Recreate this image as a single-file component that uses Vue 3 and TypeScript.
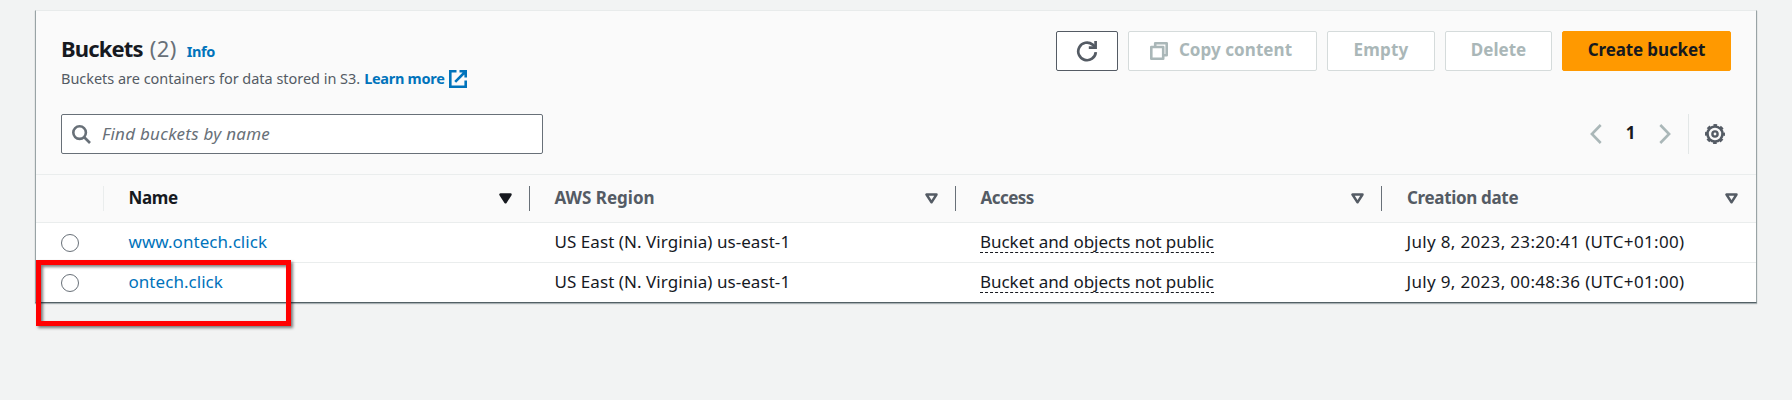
<script setup lang="ts">
interface Bucket {
  name: string
  region: string
  access: string
  created: string
}

const columns = [
  { label: 'Name', cls: 'h-name', sorted: true },
  { label: 'AWS Region', cls: '', sorted: false },
  { label: 'Access', cls: 'h-access', sorted: false },
  { label: 'Creation date', cls: 'h-date', sorted: false },
]

const buckets: Bucket[] = [
  { name: 'www.ontech.click', region: 'US East (N. Virginia) us-east-1', access: 'Bucket and objects not public', created: 'July 8, 2023, 23:20:41 (UTC+01:00)' },
  { name: 'ontech.click', region: 'US East (N. Virginia) us-east-1', access: 'Bucket and objects not public', created: 'July 9, 2023, 00:48:36 (UTC+01:00)' },
]
</script>

<template>
  <main class="page">
    <section class="panel">
      <header class="head">
        <div class="titles">
          <h2 class="title">Buckets <span class="count">(2)</span><a class="info">Info</a></h2>
          <p class="desc">
            <span>Buckets are containers for data stored in S3.</span>
            <a class="learn">Learn more</a>
            <svg class="ext" width="18" height="18" viewBox="0 0 18 18" fill="none" stroke="currentColor" stroke-width="2.6">
              <path d="M7.5 1.3H1.3v15.4h15.4V10.5" />
              <path d="M10.5 1.3h6.2v6.2M16.5 1.5L6.2 11.8" />
            </svg>
          </p>
        </div>
        <div class="actions">
          <button class="btn refresh" aria-label="Refresh">
            <svg width="22" height="22" viewBox="0 0 22 22" fill="none" stroke="currentColor" stroke-width="2.7">
              <path d="M19.8 12.2a8.8 8.8 0 1 1-3.2-7.6l2.4 2.2" />
              <path d="M19.6 1v6.7h-6.8" />
            </svg>
          </button>
          <button class="btn off copy">
            <svg width="18" height="18" viewBox="0 0 18 18" fill="none" stroke="currentColor" stroke-width="2.6" stroke-linejoin="round">
              <path d="M1.3 5h11.9v11.7H1.3z" />
              <path d="M5.2 4.8V1.3h11.5v11.9H13.4" />
            </svg>
            <span>Copy content</span>
          </button>
          <button class="btn off empty">Empty</button>
          <button class="btn off delete">Delete</button>
          <button class="btn primary">Create bucket</button>
        </div>
      </header>

      <div class="tools">
        <div class="search">
          <svg width="19" height="19" viewBox="0 0 19 19" fill="none" stroke="currentColor" stroke-width="2.6">
            <circle cx="7.6" cy="7.6" r="6.3" />
            <path d="M12 12l6 6" />
          </svg>
          <span>Find buckets by name</span>
        </div>
        <div class="pager">
          <svg class="arrow" width="12" height="20" viewBox="0 0 12 20" fill="none" stroke="currentColor" stroke-width="2.6"><path d="M10.7 1L1.9 10l8.8 9" /></svg>
          <span class="num">1</span>
          <svg class="arrow" width="12" height="20" viewBox="0 0 12 20" fill="none" stroke="currentColor" stroke-width="2.6"><path d="M1.3 1l8.8 9-8.8 9" /></svg>
          <span class="rule"></span>
          <svg class="gear" width="20" height="20" viewBox="0 0 20 20" fill="none" stroke="currentColor">
            <circle cx="10" cy="10" r="7.5" stroke-width="2.6" />
            <circle cx="10" cy="10" r="9" stroke-width="2" stroke-dasharray="3.7 3.369" stroke-dashoffset="1.85" />
            <circle cx="10" cy="10" r="2.6" stroke-width="2.4" />
          </svg>
        </div>
      </div>

      <div class="row header">
        <div class="pick"></div>
        <div v-for="c in columns" :key="c.label" class="cell" :class="{ sorted: c.sorted }">
          <span :class="c.cls">{{ c.label }}</span>
          <svg width="13" height="11" viewBox="0 0 13 11" stroke="currentColor" stroke-width="2.5" stroke-linejoin="round" :fill="c.sorted ? 'currentColor' : 'none'">
            <path d="M1.5 1.5h10L6.5 9.3z" />
          </svg>
        </div>
      </div>
      <div v-for="b in buckets" :key="b.name" class="row">
        <div class="pick"><span class="radio"></span></div>
        <div class="cell"><a class="name">{{ b.name }}</a></div>
        <div class="cell"><span class="region">{{ b.region }}</span></div>
        <div class="cell"><span class="access">{{ b.access }}</span></div>
        <div class="cell"><span class="date">{{ b.created }}</span></div>
      </div>
    </section>
    <div class="marker"></div>
  </main>
</template>

<style>
body {
  background: #f2f3f3;
}
</style>

<style scoped>
.page {
  position: relative;
  box-sizing: border-box;
  height: 400px;
  padding: 10px 35px 0;
  background: #f2f3f3;
  font-family: "Noto Sans", "Open Sans", sans-serif;
  font-size: 17px;
  color: #16191f;
  overflow: hidden;
}
.page * {
  box-sizing: border-box;
}
.panel {
  height: 293px;
  background: #fafafa;
  border: 1px solid #99a3a5;
  border-top-color: #e8ebeb;
  border-bottom-color: #536065;
  box-shadow: 0 1px 1px rgba(0, 28, 36, 0.3);
}
.head {
  display: flex;
  justify-content: space-between;
  height: 103px;
  padding: 20px 25px 0;
}
.title {
  display: flex;
  align-items: baseline;
  margin: 2px 0 0;
  font-size: 22px;
  line-height: 30px;
  letter-spacing: -0.85px;
}
.count {
  margin-left: 7px;
  font-weight: 400;
  letter-spacing: 0.4px;
  color: #687078;
}
.info {
  margin-left: 10px;
  font-size: 14.5px;
  letter-spacing: -0.4px;
  color: #0073bb;
}
.desc {
  display: flex;
  align-items: center;
  margin: 0;
  font-size: 14.5px;
  line-height: 24px;
  letter-spacing: -0.03px;
  color: #545b64;
}
.learn {
  margin-left: 4px;
  font-weight: 700;
  letter-spacing: -0.28px;
  color: #0073bb;
}
.ext {
  margin-left: 4px;
  margin-top: 1px;
  color: #0073bb;
}
.actions {
  display: flex;
  gap: 10px;
}
.btn {
  display: flex;
  align-items: center;
  justify-content: center;
  height: 40px;
  padding: 0 0 3px;
  border: 1px solid #545b64;
  border-radius: 2px;
  background: #fff;
  font: 700 17px "Noto Sans", sans-serif;
  color: #545b64;
}
.refresh {
  width: 62px;
  padding: 0;
}
.off {
  border-color: #d5dbdb;
  color: #aab7b8;
}
.copy {
  width: 189px;
  padding-right: 3px;
  gap: 11px;
  letter-spacing: 0.06px;
}
.copy svg {
  position: relative;
  top: 1px;
}
.empty {
  width: 108px;
  letter-spacing: 0.2px;
}
.delete {
  width: 107px;
}
.primary {
  width: 169px;
  border-color: #ff9900;
  background: #ff9900;
  color: #16191f;
  letter-spacing: -0.12px;
}
.tools {
  display: flex;
  justify-content: space-between;
  height: 60px;
  padding: 0 31px 0 25px;
}
.search {
  display: flex;
  align-items: center;
  width: 482px;
  height: 40px;
  padding-left: 10px;
  gap: 11px;
  border: 1px solid #687078;
  border-radius: 2px;
  background: #fff;
  font-style: italic;
  letter-spacing: 0.27px;
  color: #687078;
}
.search span {
  padding-bottom: 1px;
}
.pager {
  display: flex;
  align-items: center;
  height: 40px;
}
.arrow {
  color: #aab7b8;
}
.num {
  width: 57px;
  padding-bottom: 3px;
  text-align: center;
  font-weight: 700;
}
.rule {
  width: 1px;
  height: 40px;
  margin: 0 16px 0 17px;
  background: #e3e7e7;
}
.gear {
  color: #545b64;
}
.row {
  display: grid;
  grid-template-columns: 68px 426px 426px 426px 374px;
  height: 40px;
  border-top: 1px solid #eaeded;
  background: #fff;
}
.header {
  height: 48px;
  background: #fafafa;
  font-weight: 700;
  color: #545b64;
}
.pick {
  display: flex;
  align-items: center;
  padding-left: 25px;
}
.radio {
  width: 18px;
  height: 18px;
  border: 1.5px solid #687078;
  border-radius: 50%;
}
.cell {
  display: flex;
  align-items: center;
  justify-content: space-between;
  padding: 0 17.5px 2px 24.5px;
}
.header .pick,
.header .cell {
  height: 25px;
  margin-top: 11px;
  border-right: 1px solid #687078;
}
.header .cell svg {
  margin-top: 2px;
}
.header .pick {
  border-right-color: #eaeded;
}
.header .cell:last-child {
  padding-left: 25px;
  padding-right: 18.5px;
  border-right: 0;
}
.header .sorted {
  color: #16191f;
}
.h-name {
  letter-spacing: -0.4px;
}
.h-access {
  letter-spacing: -0.55px;
}
.h-date {
  letter-spacing: -0.33px;
}
.name {
  letter-spacing: 0.04px;
  color: #0073bb;
}
.region {
  letter-spacing: 0.06px;
}
.access {
  height: 22px;
  line-height: 21px;
  letter-spacing: -0.04px;
  margin: 1px 0 0 -0.5px;
  border-bottom: 1px dashed #16191f;
}
.date {
  letter-spacing: 0.33px;
}
.marker {
  position: absolute;
  left: 36px;
  top: 260px;
  width: 255px;
  height: 66px;
  border: 5px solid #ff0000;
  filter: drop-shadow(2px 2px 1.5px rgba(0, 0, 0, 0.5));
}
</style>
